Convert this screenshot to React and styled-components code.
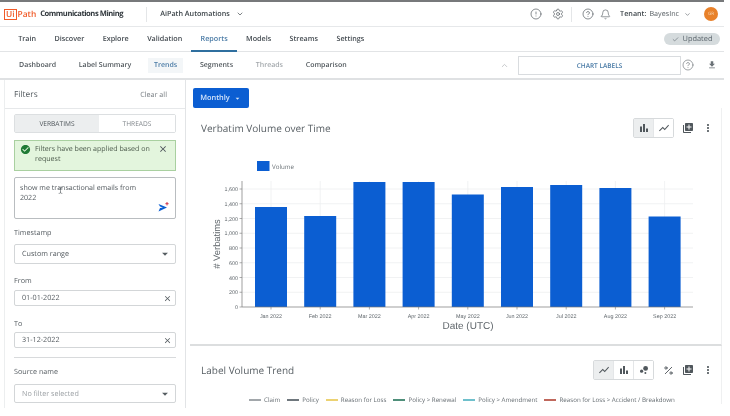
import React from 'react'
import styled, { createGlobalStyle } from 'styled-components'
import { CircleAlert, Settings, CircleHelp, Bell, ChevronDown, ChevronUp, Check, Percent, TextCursor } from 'lucide-react'
import { MdCheckCircle, MdClose, MdArrowDropDown, MdLibraryAdd, MdMoreVert, MdShowChart, MdBarChart, MdBubbleChart, MdFileDownload } from 'react-icons/md'

const GlobalStyle = createGlobalStyle`
  html, body {
    margin: 0;
    padding: 0;
    background: #fff;
    font-family: "Open Sans", "Noto Sans", sans-serif;
    color: #4a5157;
    text-rendering: geometricPrecision;
  }
`

const Page = styled.div`
  width: 730px;
  height: 416px;
  overflow: hidden;
  background: #fff;
  filter: blur(0.4px);
`

const Shell = styled.div`
  width: 724px;
  border-top: 2px solid #77797b;
`

const Header = styled.header`
  display: flex;
  align-items: center;
  height: 24px;
  padding: 0 6px 0 4px;
  border-bottom: 1px solid #e6e8ea;
`

const Logo = styled.div`
  display: flex;
  align-items: center;
  flex: 0 0 32px;
  font-size: 8.4px;
  font-weight: 600;
  color: #f05a28;
  span {
    border: 1px solid #f05a28;
    padding: 0 1px;
    margin-right: 1px;
    line-height: 9px;
  }
`

const Product = styled.div`
  flex: 0 0 100px;
  margin-left: 4px;
  font-size: 7.6px;
  font-weight: 700;
  letter-spacing: -0.45px;
  color: #2f363b;
  white-space: nowrap;
`

const VRule = styled.div`
  width: 1px;
  height: 15px;
  background: #e4e6e8;
  margin: ${p => p.$margin};
`

const Org = styled.div`
  display: flex;
  align-items: center;
  gap: 6px;
  font-size: 7.2px;
  font-weight: 600;
  color: #3c4449;
  white-space: nowrap;
`

const HeaderRight = styled.div`
  margin-left: auto;
  display: flex;
  align-items: center;
  color: #555c61;
`

const HeaderIcons = styled.div`
  display: flex;
  align-items: center;
  gap: ${p => p.$gap}px;
`

const Tenant = styled.div`
  display: flex;
  align-items: center;
  gap: 3px;
  margin-left: 9px;
  font-size: 7.2px;
  white-space: nowrap;
  b { font-weight: 600; color: #3c4449; }
`

const Avatar = styled.div`
  width: 14px;
  height: 14px;
  margin-left: 13px;
  border-radius: 50%;
  background: #e8812a;
  color: #f7d9b8;
  font-size: 4.5px;
  display: flex;
  align-items: center;
  justify-content: center;
`

const Nav = styled.nav`
  display: flex;
  align-items: center;
  height: 24px;
  padding-left: 9px;
  border-bottom: 1px solid #e2e4e6;
`

const NavItem = styled.div`
  align-self: stretch;
  display: flex;
  align-items: center;
  padding: 0 9.2px;
  font-size: 7.2px;
  font-weight: 600;
  white-space: nowrap;
  color: ${p => (p.$active ? '#4a7ba6' : '#454c52')};
  border-bottom: 2px solid ${p => (p.$active ? '#2f6f9f' : 'transparent')};
  margin-bottom: -1px;
`

const Pill = styled.div`
  margin-left: auto;
  margin-right: 4px;
  display: flex;
  align-items: center;
  justify-content: center;
  gap: 4px;
  width: 56px;
  height: 12px;
  border-radius: 6px;
  background: #d5dbdd;
  font-size: 7.4px;
  color: #59636a;
`

const SubNav = styled.div`
  display: flex;
  align-items: center;
  height: 26px;
  padding-left: 13px;
  border-bottom: 2px solid #dfe1e3;
`

const SubItem = styled.div`
  padding: 3px 6px;
  margin-right: 10.7px;
  font-size: 7px;
  font-weight: 600;
  white-space: nowrap;
  background: ${p => (p.$active ? '#f3f6f8' : 'transparent')};
  color: ${p => (p.$active ? '#4a7ba6' : p.$muted ? '#a3a8ac' : '#50575c')};
`

const SubRight = styled.div`
  margin-left: auto;
  display: flex;
  align-items: center;
  color: #6a7176;
`

const ChartLabels = styled.div`
  width: 163px;
  height: 19px;
  margin-left: 9px;
  border: 1px solid #d9dcdf;
  box-sizing: border-box;
  display: flex;
  align-items: center;
  justify-content: center;
  font-size: 6.5px;
  font-weight: 600;
  color: #4a7ba6;
`

const SubIcons = styled.div`
  display: flex;
  align-items: center;
  gap: 13px;
  margin: 0 7px 0 1px;
`

const Body = styled.div`
  display: flex;
  padding-left: 4px;
  height: 328px;
`

const Sidebar = styled.aside`
  width: 182px;
  box-sizing: border-box;
  border-left: 1px solid #eceeef;
  border-right: 1px solid #e2e4e6;
  display: flex;
  flex-direction: column;
`

const SideHead = styled.div`
  display: flex;
  align-items: center;
  justify-content: space-between;
  height: 27px;
  padding: 1px 18px 0 9px;
  border-bottom: 1px solid #e6e8ea;
  font-size: 8.4px;
  color: #565d62;
  small { font-size: 7.2px; color: #777d82; }
`

const SideBody = styled.div`
  padding: 5px 9px 0;
  display: flex;
  flex-direction: column;
`

const Tabs = styled.div`
  display: flex;
  height: 19px;
  border: 1px solid #dcdfe1;
  border-radius: 2px;
  box-sizing: border-box;
  margin-bottom: 7px;
`

const Tab = styled.div`
  flex: ${p => (p.$active ? '0 0 84px' : 1)};
  display: flex;
  align-items: center;
  justify-content: center;
  font-size: 6.6px;
  font-weight: 500;
  background: ${p => (p.$active ? '#eceeef' : '#fff')};
  color: ${p => (p.$active ? '#4d5459' : '#80868b')};
`

const Alert = styled.div`
  display: flex;
  height: 31px;
  box-sizing: border-box;
  padding: 3px 7px 0 5px;
  gap: 4px;
  background: #e3f5dd;
  border: 1px solid #a9d0a0;
  font-size: 7.1px;
  line-height: 10px;
  color: #4c5b4c;
  margin-bottom: 6px;
  svg { flex: none; }
  p { margin: 0; flex: 1; }
`

const Prompt = styled.div`
  position: relative;
  height: 42px;
  box-sizing: border-box;
  padding: 5px 5px;
  border: 1px solid #b9bdc0;
  border-radius: 2px;
  font-size: 7.1px;
  line-height: 10px;
  color: #50575c;
`

const Caret = styled.span`
  position: absolute;
  left: 42px;
  top: 9px;
  color: #5a6166;
  display: flex;
`

const SendIcon = styled.svg`
  position: absolute;
  right: 5px;
  bottom: 5px;
`

const Label = styled.div`
  font-size: 7.2px;
  line-height: 10px;
  color: #565d62;
  margin: ${p => p.$margin};
`

const Field = styled.div`
  display: flex;
  align-items: center;
  justify-content: space-between;
  height: ${p => p.$height}px;
  box-sizing: border-box;
  padding: 0 ${p => p.$right}px 0 7px;
  border: 1px solid #d3d6d8;
  border-radius: 2px;
  font-size: 7.2px;
  color: ${p => (p.$muted ? '#9a9fa3' : '#50575c')};
  svg { color: #565d62; }
`

const Divider = styled.div`
  height: 1px;
  background: #d8dadc;
  margin: 9px 0;
`

const Main = styled.main`
  flex: 1;
  min-width: 0;
  display: flex;
  flex-direction: column;
`

const MonthlyRow = styled.div`
  padding: 8px 0 0 7px;
`

const MonthlyButton = styled.div`
  width: 56px;
  height: 20px;
  border-radius: 2px;
  background: #0b5ed2;
  color: #d6e6fb;
  font-size: 7.4px;
  font-weight: 600;
  display: flex;
  align-items: center;
  justify-content: center;
  gap: 3px;
`

const Card = styled.section`
  margin-left: 4px;
  margin-right: 2px;
  border-right: 1px solid #eff0f1;
  border-bottom: ${p => (p.$ruled ? '2px solid #dcdedf' : 'none')};
  display: flex;
  flex-direction: column;
`

const CardHead = styled.div`
  display: flex;
  align-items: center;
  justify-content: space-between;
  height: 20px;
  margin-top: ${p => p.$top}px;
  padding: 0 3px 0 11px;
`

const CardTitle = styled.h2`
  margin: 0;
  font-size: 10px;
  font-weight: 400;
  color: #5a6166;
`

const Tools = styled.div`
  display: flex;
  align-items: center;
  color: #50575c;
`

const ToggleGroup = styled.div`
  display: flex;
  height: 20px;
  border: 1px solid #d7dadc;
  border-radius: 2px;
  box-sizing: border-box;
  margin-right: 4px;
`

const Toggle = styled.div`
  width: 19px;
  display: flex;
  align-items: center;
  justify-content: center;
  background: ${p => (p.$active ? '#eceeef' : '#fff')};
  & + & { border-left: 1px solid #e4e6e8; }
`

const ToolIcon = styled.div`
  width: 20px;
  display: flex;
  justify-content: center;
`

const ChartSvg = styled.svg`
  display: block;
  margin: 12px 0 8px;
`

const Legend = styled.div`
  display: flex;
  align-items: center;
  padding: 15px 0 0 59px;
  font-size: 6.2px;
  color: #666d72;
  white-space: nowrap;
`

const LegendItem = styled.div`
  display: flex;
  align-items: center;
  gap: 3px;
  margin-right: 7px;
  &::before {
    content: '';
    width: 12px;
    height: 2px;
    background: ${p => p.$color};
  }
`

const months = [
  { name: 'Jan 2022', top: 206 },
  { name: 'Feb 2022', top: 215 },
  { name: 'Mar 2022', top: 181 },
  { name: 'Apr 2022', top: 181 },
  { name: 'May 2022', top: 193.5 },
  { name: 'Jun 2022', top: 186 },
  { name: 'Jul 2022', top: 184 },
  { name: 'Aug 2022', top: 187 },
  { name: 'Sep 2022', top: 215.5 },
]
const yTicks = ['0', '200', '400', '600', '800', '1,000', '1,200', '1,400', '1,600']

const VolumeChart = () => {
  // coordinates are page pixels, viewBox starts where the svg sits
  const baseY = 306
  const step = 14.75
  return (
    <ChartSvg width="531" height="186" viewBox="190 149 531 186">
      <rect x="257" y="160" width="12.5" height="10" fill="#0b5ed2" />
      <text x="272" y="167.5" fontSize="6.2" fill="#6a7176">Volume</text>
      {yTicks.map((t, i) => {
        const y = baseY - i * step
        return (
          <g key={t}>
            {i > 0 && <line x1="242" x2="693" y1={y} y2={y} stroke="#eeeff0" strokeWidth="0.8" />}
            <line x1="239.5" x2="242" y1={y} y2={y} stroke="#777" strokeWidth="0.6" />
            <text x="238" y={y + 2} fontSize="5.4" textAnchor="end" fill="#5f666b" fontFamily="Liberation Sans">{t}</text>
          </g>
        )
      })}
      {months.map((m, i) => {
        const x = 271 + i * 49.2
        return (
          <g key={m.name}>
            <line x1={x} x2={x} y1="180" y2="306" stroke="#eeeff0" strokeWidth="0.8" />
            <rect x={x - 16} y={m.top} width="32" height={baseY - m.top} fill="#0b5ed2" />
            <line x1={x} x2={x} y1="306" y2="308.5" stroke="#777" strokeWidth="0.6" />
            <text x={x} y="317" fontSize="5.4" textAnchor="middle" fill="#5f666b" fontFamily="Liberation Sans">{m.name}</text>
          </g>
        )
      })}
      <line x1="242" x2="242" y1="180" y2="306" stroke="#777" strokeWidth="0.7" />
      <line x1="242" x2="693" y1="306" y2="306" stroke="#777" strokeWidth="0.7" />
      <text x="468" y="328" fontSize="10" textAnchor="middle" fill="#5f666b" fontFamily="Liberation Sans">Date (UTC)</text>
      <text transform="translate(220 243) rotate(-90)" fontSize="9.4" textAnchor="middle" fill="#5f666b" fontFamily="Liberation Sans"># Verbatims</text>
    </ChartSvg>
  )
}

export default function App() {
  return (
    <Page>
      <GlobalStyle />
      <Shell>
        <Header>
          <Logo><span>Ui</span>Path</Logo>
          <Product>Communications Mining</Product>
          <VRule $margin="0 13px 0 6px" />
          <Org>AiPath Automations <ChevronDown size={8} /></Org>
          <HeaderRight>
            <HeaderIcons $gap={10}>
              <CircleAlert size={12} strokeWidth={1.4} />
              <Settings size={12} strokeWidth={1.4} />
            </HeaderIcons>
            <VRule $margin="0 10px 0 7px" />
            <HeaderIcons $gap={6}>
              <CircleHelp size={12} strokeWidth={1.4} />
              <Bell size={11} strokeWidth={1.4} />
            </HeaderIcons>
            <Tenant><b>Tenant:</b> BayesInc <ChevronDown size={7} style={{ marginLeft: 2 }} /></Tenant>
            <Avatar>GR</Avatar>
          </HeaderRight>
        </Header>
        <Nav>
          {['Train', 'Discover', 'Explore', 'Validation', 'Reports', 'Models', 'Streams', 'Settings'].map(n => (
            <NavItem key={n} $active={n === 'Reports'}>{n}</NavItem>
          ))}
          <Pill><Check size={7} /> Updated</Pill>
        </Nav>
        <SubNav>
          {['Dashboard', 'Label Summary', 'Trends', 'Segments', 'Threads', 'Comparison'].map(n => (
            <SubItem key={n} $active={n === 'Trends'} $muted={n === 'Threads'}>{n}</SubItem>
          ))}
          <SubRight>
            <ChevronUp size={9} color="#b4b8bb" />
            <ChartLabels>CHART LABELS</ChartLabels>
            <SubIcons>
              <CircleHelp size={12} strokeWidth={1.3} />
              <MdFileDownload size={10} />
            </SubIcons>
          </SubRight>
        </SubNav>
        <Body>
          <Sidebar>
            <SideHead>Filters <small>Clear all</small></SideHead>
            <SideBody>
              <Tabs>
                <Tab $active>VERBATIMS</Tab>
                <Tab>THREADS</Tab>
              </Tabs>
              <Alert>
                <MdCheckCircle size={11} color="#1f7a35" />
                <p>Filters have been applied based on request</p>
                <MdClose size={10} color="#4a5157" />
              </Alert>
              <Prompt>
                show me transactional emails from<br />2022
                <Caret><TextCursor size={7} /></Caret>
                <SendIcon width="12" height="12" viewBox="0 0 12 12">
                  <path d="M0.5 3 L9 6.5 L0.5 10.5 L2 7 L5 6.5 L2 5.6 Z" fill="#0b5ed2" />
                  <path d="M9 1 v3.4 M7.4 2.7 h3.2" stroke="#d0384b" strokeWidth="1" />
                </SendIcon>
              </Prompt>
              <Label $margin="9px 0 6px">Timestamp</Label>
              <Field $height={20} $right={3}>Custom range <MdArrowDropDown size={14} /></Field>
              <Label $margin="12px 0 4px">From</Label>
              <Field $height={16} $right={3}>01-01-2022 <MdClose size={9} /></Field>
              <Label $margin="13px 0 3px">To</Label>
              <Field $height={16} $right={3}>31-12-2022 <MdClose size={9} /></Field>
              <Divider />
              <Label $margin="0 0 7px">Source name</Label>
              <Field $height={19} $right={3} $muted>No filter selected <MdArrowDropDown size={14} /></Field>
            </SideBody>
          </Sidebar>
          <Main>
            <MonthlyRow>
              <MonthlyButton>Monthly <MdArrowDropDown size={9} /></MonthlyButton>
            </MonthlyRow>
            <Card $ruled>
              <CardHead $top={10}>
                <CardTitle>Verbatim Volume over Time</CardTitle>
                <Tools>
                  <ToggleGroup>
                    <Toggle $active><MdBarChart size={12} /></Toggle>
                    <Toggle><MdShowChart size={12} /></Toggle>
                  </ToggleGroup>
                  <ToolIcon><MdLibraryAdd size={12} /></ToolIcon>
                  <ToolIcon><MdMoreVert size={12} /></ToolIcon>
                </Tools>
              </CardHead>
              <VolumeChart />
            </Card>
            <Card>
              <CardHead $top={14}>
                <CardTitle>Label Volume Trend</CardTitle>
                <Tools>
                  <ToggleGroup>
                    <Toggle $active><MdShowChart size={12} /></Toggle>
                    <Toggle><MdBarChart size={12} /></Toggle>
                    <Toggle><MdBubbleChart size={12} /></Toggle>
                  </ToggleGroup>
                  <ToolIcon><Percent size={11} /></ToolIcon>
                  <ToolIcon><MdLibraryAdd size={12} /></ToolIcon>
                  <ToolIcon><MdMoreVert size={12} /></ToolIcon>
                </Tools>
              </CardHead>
              <Legend>
                <LegendItem $color="#a2a7ab">Claim</LegendItem>
                <LegendItem $color="#6f777d">Policy</LegendItem>
                <LegendItem $color="#ecd272">Reason for Loss</LegendItem>
                <LegendItem $color="#4f8f7a">Policy &gt; Renewal</LegendItem>
                <LegendItem $color="#6fc0cc">Policy &gt; Amendment</LegendItem>
                <LegendItem $color="#c0685c">Reason for Loss &gt; Accident / Breakdown</LegendItem>
              </Legend>
            </Card>
          </Main>
        </Body>
      </Shell>
    </Page>
  )
}
